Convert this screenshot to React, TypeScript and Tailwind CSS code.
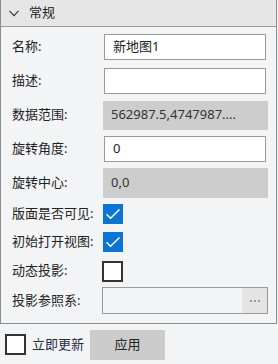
import React from 'react';

const font = { fontFamily: '"Noto Sans", "Noto Sans CJK SC", sans-serif' };

const Check = ({ checked }: { checked: boolean }) =>
  checked ? (
    <div className="w-[20px] h-[20px] bg-[#0b74d5] flex items-center justify-center">
      <svg width="16" height="12" viewBox="0 0 16 12" fill="none">
        <path d="M1.5 6.2 L5.6 10.2 L14.5 1.5" stroke="white" strokeWidth="1.4" />
      </svg>
    </div>
  ) : (
    <div className="w-[21px] h-[21px] border-2 border-[#333] bg-white" />
  );

const Row = ({ label, h, children }: { label: string; h: string; children: React.ReactNode }) => (
  <div className={`flex items-center ${h}`}>
    <div className="w-[102px] pl-[11px] text-[13px] text-[#222]">{label}</div>
    <div className="w-[165px]">{children}</div>
  </div>
);

const Input = ({ value }: { value: string }) => (
  <div className="ml-[1px] mr-[2px] h-[26px] border border-[#9a9a9a] bg-white flex items-center px-[8px] text-[13px] text-[#222]">
    {value}
  </div>
);

const Gray = ({ value, h }: { value: string; h: string }) => (
  <div className={`${h} bg-[#cdcdcd] flex items-center px-[8px] text-[13px] text-[#333] whitespace-nowrap overflow-hidden`}>
    {value}
  </div>
);

export default function App() {
  return (
    <div className="w-[278px] h-[364px] bg-[#f3f4f6]" style={font}>
      <div className="w-[277px] border border-t-0 border-[#8c8c8c]">
        <div className="h-[27px] bg-[#e6e6e6] border-b border-[#9a9a9a] flex items-center">
          <svg className="ml-[8px]" width="10" height="7" viewBox="0 0 10 7" fill="none">
            <path d="M0.5 0.8 L5 5.6 L9.5 0.8" stroke="#333" strokeWidth="1.1" />
          </svg>
          <span className="ml-[10px] text-[13px] text-[#222]">常规</span>
        </div>
        <div className="pt-[3px] pb-[8px]">
          <Row label="名称:" h="h-[34px]"><Input value="新地图1" /></Row>
          <Row label="描述:" h="h-[34px]"><Input value="" /></Row>
          <Row label="数据范围:" h="h-[34px]"><Gray value="562987.5,4747987...." h="h-[29px]" /></Row>
          <Row label="旋转角度:" h="h-[34px]"><Input value="0" /></Row>
          <Row label="旋转中心:" h="h-[34px]"><Gray value="0,0" h="h-[30px]" /></Row>
          <Row label="版面是否可见:" h="h-[28px]"><Check checked /></Row>
          <Row label="初始打开视图:" h="h-[28px]"><Check checked /></Row>
          <Row label="动态投影:" h="h-[30px]"><div className="-ml-[1px]"><Check checked={false} /></div></Row>
          <Row label="投影参照系:" h="h-[29px]">
            <div className="-ml-[1px] h-[27px] border border-[#9a9a9a] flex justify-end">
              <div className="w-[25px] h-[25px] bg-[#e4e4e4] flex items-center justify-center gap-[2px] mb-[1px]">
                <span className="w-[2px] h-[2px] bg-[#999]" />
                <span className="w-[2px] h-[2px] bg-[#999]" />
                <span className="w-[2px] h-[2px] bg-[#999]" />
              </div>
            </div>
          </Row>
        </div>
      </div>
      <div className="flex items-center h-[41px] pl-[5px]">
        <div className="w-[21px] h-[21px] border-2 border-[#333] bg-white" />
        <span className="ml-[6px] text-[13px] text-[#1f2a4d]">立即更新</span>
        <div className="ml-[6px] w-[75px] h-[30px] bg-[#cccccc] flex items-center justify-center text-[13px] text-[#222]">
          应用
        </div>
      </div>
    </div>
  );
}
